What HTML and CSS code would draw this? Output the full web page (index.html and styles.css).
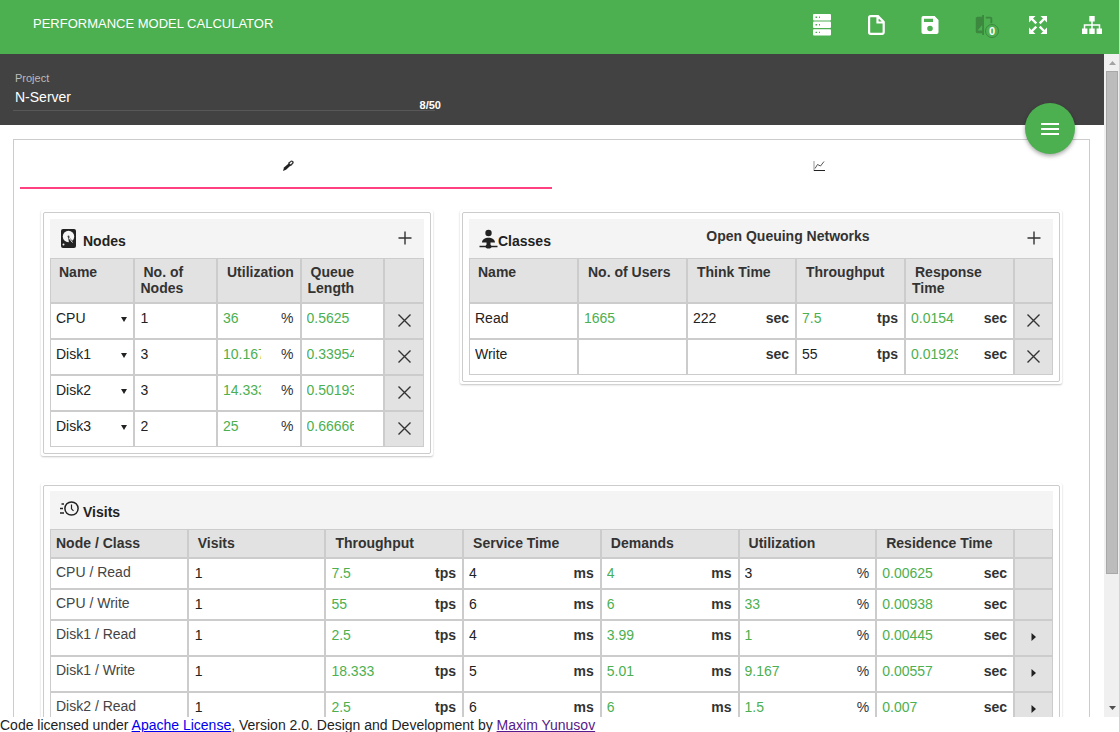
FILE: index.html
```html
<!DOCTYPE html>
<html lang="en">
<head>
<meta charset="utf-8">
<title>Performance Model Calculator</title>
<link rel="stylesheet" href="styles.css">
</head>
<body>
<header class="appbar">
  <h1 class="appbar-title">PERFORMANCE MODEL CALCULATOR</h1>
  <nav class="appbar-actions">
    <button class="icon-btn" aria-label="Servers"><svg width="18" height="22" viewBox="0 0 18 22"><g fill="#fff"><rect y="0" width="18" height="6.4" rx="1"/><rect y="7.6" width="18" height="6.4" rx="1"/><rect y="15.2" width="18" height="6.4" rx="1"/></g><path d="M2.5 3.2h1.6M6 3.2h1M2.5 10.8h1.6M6 10.8h1M2.5 18.4h1.6M6 18.4h1" stroke="#4caf50" stroke-width="1.4"/></svg></button>
    <button class="icon-btn" aria-label="New"><svg width="17" height="20" viewBox="0 0 17 20"><path d="M2.5 1.2H10L15.7 7v10.3a1.5 1.5 0 0 1-1.5 1.5H2.6a1.5 1.5 0 0 1-1.5-1.5V2.6a1.4 1.4 0 0 1 1.4-1.4zM9.5 1.5v6h6" fill="none" stroke="#fff" stroke-width="2.2"/></svg></button>
    <button class="icon-btn" aria-label="Save"><svg width="24" height="24" viewBox="0 0 24 24"><path fill="#fff" d="M16.6 3H5.2A1.8 1.8 0 0 0 3.5 4.8v14.400a1.800 1.800 0 0 0 1.800 1.800h13.400a1.800 1.800 0 0 0 1.800-1.800V7zM12 18.300a2.800 2.800 0 1 1 0-5.600 2.800 2.800 0 0 1 0 5.600zM15 9H6V5.700h9z"/></svg></button>
    <button class="icon-btn" aria-label="Compare, 0 items" disabled><span class="compare"><svg width="22" height="22" viewBox="0 0 24 24"><path fill="#3b883e" d="M10 3H5c-1.100 0-2 .9-2 2v14c0 1.100.9 2 2 2h5v2h2V1h-2v2zm0 15H5l5-6v6zM14 3h5c1.100 0 2 .9 2 2v5h-2V5h-5z"/></svg><span class="badge">0</span></span></button>
    <button class="icon-btn" aria-label="Full screen"><svg width="18" height="18" viewBox="0 0 18 18"><path d="M0 0h6.500L0 6.500zM18 0v6.500L11.500 0zM0 18v-6.500L6.500 18zM18 18h-6.500l6.500-6.500z" fill="#fff"/><path d="M2 2l5.300 5.300M16 2l-5.300 5.300M2 16l5.300-5.300M16 16l-5.300-5.300" stroke="#fff" stroke-width="2.400"/></svg></button>
    <button class="icon-btn" aria-label="Diagram"><svg width="20" height="20" viewBox="0 0 20 20"><path fill="#fff" d="M7.300 1h5.400v5.400H7.300zM0 13.500h5.400V19H0zM7.300 13.500h5.400V19H7.300zM14.600 13.500H20V19h-5.400z"/><path d="M10 5v9M2.500 14v-4h15v4" fill="none" stroke="#fff" stroke-width="1.500"/></svg></button>
  </nav>
</header>

<div class="viewport">
  <main class="content">
    <section class="project">
      <div class="project-field">
        <label class="project-label" for="project">Project</label>
        <input class="project-input" id="project" value="N-Server" maxlength="50">
        <span class="project-count">8/50</span>
      </div>
    </section>
    <button class="fab" aria-label="Menu"><svg width="18" height="12" viewBox="0 0 18 12"><path d="M0 1h18M0 6h18M0 11h18" stroke="#fff" stroke-width="2"/></svg></button>

    <div class="panel">
      <div class="tabs" role="tablist">
        <button class="tab tab-active" role="tab" aria-selected="true" aria-label="Edit"><svg width="12" height="12" viewBox="0 0 12 12"><path d="M1 11l1-3.500L7.200 3l2 2L4 9.800z" fill="#222"/><path d="M6.300 3.600l2.600-2.200a1 1 0 0 1 1.500 0l.3.400a1 1 0 0 1 0 1.400L8.300 5.700" fill="none" stroke="#333" stroke-width="1.300"/></svg></button>
        <button class="tab" role="tab" aria-selected="false" aria-label="Chart"><svg width="12" height="12" viewBox="0 0 12 12"><path d="M1 1v10" stroke="#999"/><path d="M1 10.500h11" stroke="#222"/><path d="M2 8.500l2.500-4 3 1.500 3.500-4.500" fill="none" stroke="#555"/></svg></button>
      </div>

      <div class="cards">
        <section class="card">
          <div class="card-body">
            <div class="card-head">
              <h2 class="card-title"><svg class="title-icon" width="23" height="20" viewBox="-1 0 23 20"><rect y="0" width="15" height="19" rx="2" fill="#222"/><circle cx="7.500" cy="7.500" r="5.700" fill="#f4f4f4"/><path d="M7 7l5.500 6-1 2.500-3.500-1z" fill="#222"/><path d="M8 9l3.500 4.500" stroke="#f4f4f4"/><circle cx="7.500" cy="7.500" r="1" fill="#444"/><circle cx="2.500" cy="15.500" r="1" fill="#f4f4f4"/></svg>Nodes</h2>
              <button class="add-btn" aria-label="Add node"><svg width="14" height="14" viewBox="0 0 14 14"><path d="M7 .5v13M.5 7h13" stroke="#333" stroke-width="1.400"/></svg></button>
            </div>
            <table class="grid">
              <colgroup><col><col><col><col><col class="col-action"></colgroup>
              <thead><tr class="tall"><th>Name</th><th>No. of Nodes</th><th>Utilization</th><th>Queue Length</th><th></th></tr></thead>
              <tbody>
                <tr><td><div class="pick"><select aria-label="Node 1 name"><option>CPU</option></select></div></td><td><input class="val" aria-label="Number of nodes" value="1"></td><td><div class="cell"><input class="val calc util" aria-label="Utilization" value="36"><span>%</span></div></td><td><input class="val calc short" aria-label="Queue length" value="0.5625"></td><td class="act"><button aria-label="Remove"><svg width="13" height="13" viewBox="0 0 13 13"><path d="M.5.5l12 12M12.500.5l-12 12" stroke="#333" stroke-width="1.400"/></svg></button></td></tr>
                <tr><td><div class="pick"><select aria-label="Node 2 name"><option>Disk1</option></select></div></td><td><input class="val" aria-label="Number of nodes" value="3"></td><td><div class="cell"><input class="val calc util" aria-label="Utilization" value="10.167"><span>%</span></div></td><td><input class="val calc short" aria-label="Queue length" value="0.33954"></td><td class="act"><button aria-label="Remove"><svg width="13" height="13" viewBox="0 0 13 13"><path d="M.5.5l12 12M12.500.5l-12 12" stroke="#333" stroke-width="1.400"/></svg></button></td></tr>
                <tr><td><div class="pick"><select aria-label="Node 3 name"><option>Disk2</option></select></div></td><td><input class="val" aria-label="Number of nodes" value="3"></td><td><div class="cell"><input class="val calc util" aria-label="Utilization" value="14.333"><span>%</span></div></td><td><input class="val calc short" aria-label="Queue length" value="0.50193"></td><td class="act"><button aria-label="Remove"><svg width="13" height="13" viewBox="0 0 13 13"><path d="M.5.5l12 12M12.500.5l-12 12" stroke="#333" stroke-width="1.400"/></svg></button></td></tr>
                <tr><td><div class="pick"><select aria-label="Node 4 name"><option>Disk3</option></select></div></td><td><input class="val" aria-label="Number of nodes" value="2"></td><td><div class="cell"><input class="val calc util" aria-label="Utilization" value="25"><span>%</span></div></td><td><input class="val calc short" aria-label="Queue length" value="0.66666"></td><td class="act"><button aria-label="Remove"><svg width="13" height="13" viewBox="0 0 13 13"><path d="M.5.5l12 12M12.500.5l-12 12" stroke="#333" stroke-width="1.400"/></svg></button></td></tr>
              </tbody>
            </table>
          </div>
        </section>

        <section class="card">
          <div class="card-body">
            <div class="card-head">
              <h2 class="card-title"><svg class="title-icon" width="19" height="20" viewBox="0 0 19 20"><circle cx="9.500" cy="4" r="3.200" fill="#222"/><path d="M3 13.500c0-3 3-4.800 6.500-4.800s6.500 1.800 6.500 4.800h-4.500v3H7.500v-3z" fill="#222"/><path d="M.5 17.500h18" stroke="#222" stroke-width="1.500"/><ellipse cx="9.500" cy="17.500" rx="3" ry="2" fill="#222"/></svg>Classes</h2>
              <strong class="card-note">Open Queuing Networks</strong>
              <button class="add-btn" aria-label="Add class"><svg width="14" height="14" viewBox="0 0 14 14"><path d="M7 .5v13M.5 7h13" stroke="#333" stroke-width="1.400"/></svg></button>
            </div>
            <table class="grid classes">
              <colgroup><col><col><col><col><col><col class="col-action"></colgroup>
              <thead><tr class="tall"><th>Name</th><th>No. of Users</th><th>Think Time</th><th>Throughput</th><th>Response Time</th><th></th></tr></thead>
              <tbody>
                <tr><td><input class="val" aria-label="Class name" value="Read"></td><td><input class="val calc" aria-label="Users" value="1665"></td><td><div class="cell"><input class="val" aria-label="Think time" value="222"><b>sec</b></div></td><td><div class="cell"><input class="val calc" aria-label="Throughput" value="7.5"><b>tps</b></div></td><td><div class="cell"><input class="val calc short" aria-label="Response time" value="0.0154"><b>sec</b></div></td><td class="act"><button aria-label="Remove"><svg width="13" height="13" viewBox="0 0 13 13"><path d="M.5.5l12 12M12.500.5l-12 12" stroke="#333" stroke-width="1.400"/></svg></button></td></tr>
                <tr><td><input class="val" aria-label="Class name" value="Write"></td><td><input class="val" aria-label="Users" value=""></td><td><div class="cell"><input class="val" aria-label="Think time" value=""><b>sec</b></div></td><td><div class="cell"><input class="val" aria-label="Throughput" value="55"><b>tps</b></div></td><td><div class="cell"><input class="val calc short" aria-label="Response time" value="0.01929"><b>sec</b></div></td><td class="act"><button aria-label="Remove"><svg width="13" height="13" viewBox="0 0 13 13"><path d="M.5.5l12 12M12.500.5l-12 12" stroke="#333" stroke-width="1.400"/></svg></button></td></tr>
              </tbody>
            </table>
          </div>
        </section>

        <section class="card card-wide">
          <div class="card-body">
            <div class="card-head">
              <h2 class="card-title"><svg class="title-icon" width="23" height="20" viewBox="1 0 23 20"><circle cx="12.500" cy="8.500" r="6.600" fill="none" stroke="#222" stroke-width="1.500"/><path d="M12.500 4.500v4.300l2 2" fill="none" stroke="#222" stroke-width="1.200"/><path d="M2.500 4H5M1 8.500h3M1 13h4" stroke="#222" stroke-width="1.400"/></svg>Visits</h2>
            </div>
            <table class="grid visits">
              <colgroup><col><col><col><col><col><col><col><col class="col-action"></colgroup>
              <thead><tr class="head"><th>Node / Class</th><th>Visits</th><th>Throughput</th><th>Service Time</th><th>Demands</th><th>Utilization</th><th>Residence Time</th><th></th></tr></thead>
              <tbody>
                <tr class="compact"><td>CPU / Read</td><td><input class="val" aria-label="Visits" value="1"></td><td><div class="cell"><input class="val calc" aria-label="Throughput" value="7.5"><b>tps</b></div></td><td><div class="cell"><input class="val" aria-label="Service time" value="4"><b>ms</b></div></td><td><div class="cell"><input class="val calc" aria-label="Demands" value="4"><b>ms</b></div></td><td><div class="cell"><input class="val" aria-label="Utilization" value="3"><span>%</span></div></td><td><div class="cell"><input class="val calc" aria-label="Residence time" value="0.00625"><b>sec</b></div></td><td class="act"></td></tr>
                <tr class="compact"><td>CPU / Write</td><td><input class="val" aria-label="Visits" value="1"></td><td><div class="cell"><input class="val calc" aria-label="Throughput" value="55"><b>tps</b></div></td><td><div class="cell"><input class="val" aria-label="Service time" value="6"><b>ms</b></div></td><td><div class="cell"><input class="val calc" aria-label="Demands" value="6"><b>ms</b></div></td><td><div class="cell"><input class="val calc" aria-label="Utilization" value="33"><span>%</span></div></td><td><div class="cell"><input class="val calc" aria-label="Residence time" value="0.00938"><b>sec</b></div></td><td class="act"></td></tr>
                <tr><td>Disk1 / Read</td><td><input class="val" aria-label="Visits" value="1"></td><td><div class="cell"><input class="val calc" aria-label="Throughput" value="2.5"><b>tps</b></div></td><td><div class="cell"><input class="val" aria-label="Service time" value="4"><b>ms</b></div></td><td><div class="cell"><input class="val calc" aria-label="Demands" value="3.99"><b>ms</b></div></td><td><div class="cell"><input class="val calc" aria-label="Utilization" value="1"><span>%</span></div></td><td><div class="cell"><input class="val calc" aria-label="Residence time" value="0.00445"><b>sec</b></div></td><td class="act"><button aria-label="Expand"><svg width="5" height="8" viewBox="0 0 5 8"><path d="M.5 0v8L5 4z" fill="#222"/></svg></button></td></tr>
                <tr><td>Disk1 / Write</td><td><input class="val" aria-label="Visits" value="1"></td><td><div class="cell"><input class="val calc" aria-label="Throughput" value="18.333"><b>tps</b></div></td><td><div class="cell"><input class="val" aria-label="Service time" value="5"><b>ms</b></div></td><td><div class="cell"><input class="val calc" aria-label="Demands" value="5.01"><b>ms</b></div></td><td><div class="cell"><input class="val calc" aria-label="Utilization" value="9.167"><span>%</span></div></td><td><div class="cell"><input class="val calc" aria-label="Residence time" value="0.00557"><b>sec</b></div></td><td class="act"><button aria-label="Expand"><svg width="5" height="8" viewBox="0 0 5 8"><path d="M.5 0v8L5 4z" fill="#222"/></svg></button></td></tr>
                <tr><td>Disk2 / Read</td><td><input class="val" aria-label="Visits" value="1"></td><td><div class="cell"><input class="val calc" aria-label="Throughput" value="2.5"><b>tps</b></div></td><td><div class="cell"><input class="val" aria-label="Service time" value="6"><b>ms</b></div></td><td><div class="cell"><input class="val calc" aria-label="Demands" value="6"><b>ms</b></div></td><td><div class="cell"><input class="val calc" aria-label="Utilization" value="1.5"><span>%</span></div></td><td><div class="cell"><input class="val calc" aria-label="Residence time" value="0.007"><b>sec</b></div></td><td class="act"><button aria-label="Expand"><svg width="5" height="8" viewBox="0 0 5 8"><path d="M.5 0v8L5 4z" fill="#222"/></svg></button></td></tr>
              </tbody>
            </table>
          </div>
        </section>
      </div>
    </div>
  </main>
  <div class="scrollbar" aria-hidden="true">
    <svg width="15" height="17" viewBox="0 0 15 17"><path d="M5 11h7L8.500 7z" fill="#a3a3a3"/></svg>
    <div class="track"><div class="thumb"></div></div>
    <svg width="15" height="17" viewBox="0 0 15 17"><path d="M5 6h7l-3.500 4z" fill="#505050"/></svg>
  </div>
</div>

<footer class="footer">Code licensed under <a href="#apache">Apache License</a>, Version 2.0. Design and Development by <a class="seen" href="#author">Maxim Yunusov</a></footer>
</body>
</html>
```

FILE: styles.css
```css
* { box-sizing: border-box; }

body {
  margin: 0;
  height: 100vh;
  display: flex;
  flex-direction: column;
  overflow: hidden;
  background: #fff;
  color: #222;
  font: 14px/16px "Liberation Sans", Arial, sans-serif;
}

button, input, select {
  margin: 0;
  padding: 0;
  border: 0;
  background: none;
  color: inherit;
  font: inherit;
}

button { cursor: pointer; }
svg { display: block; }

.appbar {
  flex: none;
  height: 54px;
  display: flex;
  justify-content: space-between;
  padding-left: 33px;
  background: #4caf50;
  color: #fff;
}
.appbar-title {
  margin: 16px 0 0;
  font-size: 13px;
  font-weight: 400;
}
.appbar-actions { display: flex; }
.icon-btn {
  width: 54px;
  height: 50px;
  display: flex;
  align-items: center;
  justify-content: center;
}
.compare { position: relative; }
.badge {
  position: absolute;
  left: 12px;
  top: 10px;
  width: 14px;
  height: 14px;
  border: 1px solid #3b883e;
  border-radius: 50%;
  background: #4caf50;
  color: #fff;
  font-size: 11px;
  font-weight: 700;
  line-height: 12px;
  text-align: center;
}

.viewport {
  flex: 1;
  min-height: 0;
  display: flex;
}
.content {
  position: relative;
  flex: 1;
  min-width: 0;
  overflow: hidden;
}

.project {
  padding: 16px 13px 14px;
  background: #424242;
  color: #fff;
}
.project-field {
  position: relative;
  max-width: 422px;
  border-bottom: 1px solid #585858;
}
.project-label {
  display: block;
  padding-left: 2px;
  color: #bbb;
  font-size: 11px;
}
.project-input {
  display: block;
  width: 100%;
  height: 24px;
  padding: 0 2px 2px;
  outline: 0;
}
.project-count {
  position: absolute;
  right: -6px;
  bottom: -3px;
  font-size: 11px;
  font-weight: 700;
}

.fab {
  position: absolute;
  right: 29px;
  top: 49px;
  width: 50px;
  height: 51px;
  display: flex;
  align-items: center;
  justify-content: center;
  border-radius: 50%;
  background: #4caf50;
  box-shadow: 0 2px 4px rgba(0, 0, 0, .35);
}

.panel {
  margin: 14px 14px 0 13px;
  padding: 0 6px;
  border: 1px solid #ccc;
}
.tabs { display: flex; }
.tab {
  flex: 1;
  height: 49px;
  padding: 5px 0 0 4px;
  display: flex;
  align-items: center;
  justify-content: center;
  border-bottom: 2px solid transparent;
}
.tab-active { border-color: #ff4081; }

.cards {
  display: grid;
  grid-template-columns: 392fr 602fr;
  gap: 27px;
  align-items: start;
  padding: 21px 21px 24px;
}
.card {
  padding: 2px;
  border-radius: 2px;
  box-shadow: 0 1px 2px rgba(0, 0, 0, .24);
}
.card-wide { grid-column: 1 / -1; }
.card-body {
  padding: 6px;
  border: 1px solid #ccc;
  border-radius: 2px;
}
.card-wide .card-body { padding-top: 5px; }
.card-head {
  height: 39px;
  display: flex;
  align-items: flex-start;
  justify-content: space-between;
  padding: 9px 10px 0;
  background: #f4f4f4;
}
.card-wide .card-head {
  height: 38px;
  padding-top: 8px;
}
.card-title {
  display: flex;
  align-items: center;
  height: 24px;
  margin: 0;
  padding-top: 2px;
  font-size: 14px;
}
.title-icon { margin-bottom: 4px; }
.card-note { color: #333; }
.add-btn {
  width: 18px;
  height: 20px;
  display: flex;
  align-items: center;
  justify-content: center;
}

.grid {
  width: 100%;
  table-layout: fixed;
  border-collapse: separate;
  border-spacing: 0;
}
.col-action { width: 40px; }
.grid th,
.grid td {
  height: 36px;
  padding: 6px 6px 0 5px;
  border: 1px solid #ccc;
  text-align: left;
  vertical-align: top;
}
.grid th {
  padding: 5px 0 0 6px;
  background: #e2e2e2;
  color: #333;
  text-indent: 3px;
}
.grid th:first-child { text-indent: 2px; }
.grid .tall th { height: 45px; }
.grid .head th { height: 29px; }
.grid .compact td { height: 31px; }
.visits td:first-child { padding-top: 5px; color: #444; }
.visits .head th:first-child { padding-left: 5px; text-indent: 0; }

.cell {
  display: flex;
  justify-content: space-between;
  color: #333;
}
.val {
  display: block;
  width: 100%;
  min-width: 0;
  height: 16px;
  color: #222;
  outline: 0;
}
td > .val { padding-left: 1px; }
.classes td > .val { padding-left: 0; }
.calc { color: #4caf50; }
td > .calc { padding-left: 0; }
.util { width: 38px; }
.short { width: 47px; }

.pick {
  position: relative;
}
.pick select {
  display: block;
  width: 100%;
  height: 16px;
  appearance: none;
  outline: 0;
}
.pick::after {
  content: "";
  position: absolute;
  right: 0;
  top: 7px;
  border: 3px solid transparent;
  border-top: 5px solid #222;
  border-bottom: 0;
  pointer-events: none;
}

.grid .act {
  padding: 0;
  background: #e2e2e2;
}
.act button {
  width: 100%;
  height: 32px;
  display: flex;
  align-items: center;
  justify-content: center;
}
.classes .col-action,
.visits .col-action { width: 39px; }

.scrollbar {
  flex: none;
  width: 15px;
  display: flex;
  flex-direction: column;
  background: #f0f0f0;
}
.track {
  flex: 1;
  padding: 0 1px 0 2px;
}
.thumb {
  height: 80%;
  border: 1px solid #a8a8a8;
  background: #bcbcbc;
}

.footer {
  flex: none;
  height: 15px;
  line-height: 16px;
  white-space: nowrap;
}
.footer a { color: #00e; }
.footer .seen { color: #551a8b; }
```
